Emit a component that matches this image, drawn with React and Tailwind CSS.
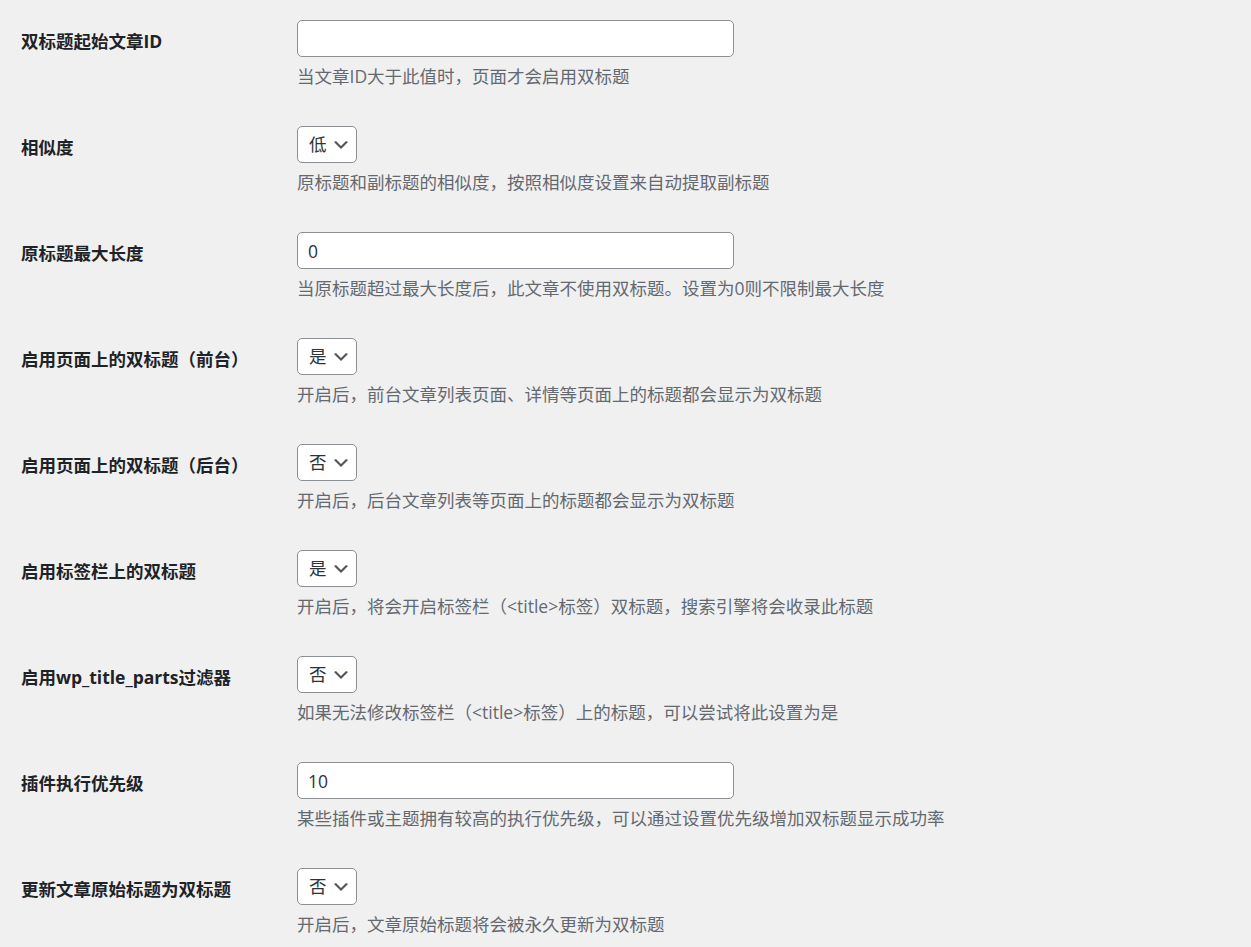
import { useState } from 'react';

const rows = [
  { label: '双标题起始文章ID', type: 'input', value: '', desc: '当文章ID大于此值时，页面才会启用双标题' },
  { label: '相似度', type: 'select', value: '低', options: ['低', '中', '高'], desc: '原标题和副标题的相似度，按照相似度设置来自动提取副标题' },
  { label: '原标题最大长度', type: 'input', value: '0', desc: '当原标题超过最大长度后，此文章不使用双标题。设置为0则不限制最大长度' },
  { label: '启用页面上的双标题（前台）', type: 'select', value: '是', options: ['是', '否'], desc: '开启后，前台文章列表页面、详情等页面上的标题都会显示为双标题' },
  { label: '启用页面上的双标题（后台）', type: 'select', value: '否', options: ['是', '否'], desc: '开启后，后台文章列表等页面上的标题都会显示为双标题' },
  { label: '启用标签栏上的双标题', type: 'select', value: '是', options: ['是', '否'], desc: '开启后，将会开启标签栏（<title>标签）双标题，搜索引擎将会收录此标题' },
  { label: '启用wp_title_parts过滤器', type: 'select', value: '否', options: ['是', '否'], desc: '如果无法修改标签栏（<title>标签）上的标题，可以尝试将此设置为是' },
  { label: '插件执行优先级', type: 'input', value: '10', desc: '某些插件或主题拥有较高的执行优先级，可以通过设置优先级增加双标题显示成功率' },
  { label: '更新文章原始标题为双标题', type: 'select', value: '否', options: ['是', '否'], desc: '开启后，文章原始标题将会被永久更新为双标题' },
];

function Chevron() {
  return (
    <svg viewBox="0 0 20 20" className="w-[20px] h-[20px] pointer-events-none" fill="#555">
      <path d="M5 6l5 5 5-5 2 1-7 7-7-7 2-1z" />
    </svg>
  );
}

function Field({ row }) {
  const [value, setValue] = useState(row.value);

  if (row.type === 'select') {
    return (
      <div className="relative w-[60px] h-[37px]">
        <select
          value={value}
          onChange={e => setValue(e.target.value)}
          className="appearance-none w-full h-full bg-white border border-[#8c8f94] rounded-[5px] pl-[11px] pr-[28px] text-[17.5px] text-[#2c3338] outline-none"
        >
          {row.options.map(o => <option key={o} value={o}>{o}</option>)}
        </select>
        <div className="absolute right-[6px] top-[9px]">
          <Chevron />
        </div>
      </div>
    );
  }

  return (
    <input
      type="text"
      value={value}
      onChange={e => setValue(e.target.value)}
      className="w-[437px] h-[37px] bg-white border border-[#8c8f94] rounded-[5px] px-[10px] text-[17.5px] text-[#2c3338] outline-none"
    />
  );
}

export default function App() {
  return (
    <div
      className="min-h-screen bg-[#f0f0f0] pt-[5px]"
      style={{ fontFamily: '"Open Sans", "Noto Sans CJK SC", sans-serif' }}
    >
      {rows.map(row => (
        <div key={row.label} className="flex h-[106px] pt-[15px]">
          {/* Label */}
          <div className="w-[297px] shrink-0 pl-[21px] pt-[3px] h-[40px] flex items-center">
            <span className="text-[17.5px] font-bold text-[#1d2327]">{row.label}</span>
          </div>

          {/* Field + description */}
          <div className="flex flex-col">
            <Field row={row} />
            <p className="mt-[6px] text-[17.5px] leading-[26px] text-[#646970]">{row.desc}</p>
          </div>
        </div>
      ))}
    </div>
  );
}
